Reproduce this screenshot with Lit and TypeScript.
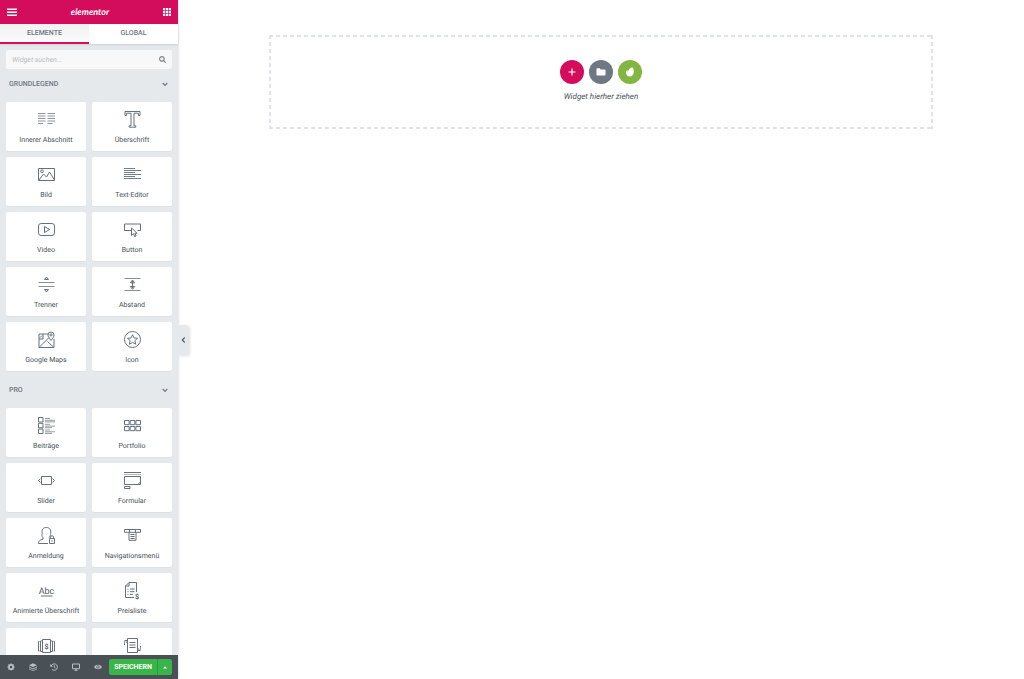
import { LitElement, html, svg, css } from "lit";
import { customElement, property, state } from "lit/decorators.js";

const icons: Record<string, unknown> = {
  columns: svg`<path opacity=".75" d="M0 2.500h7.500M9.500 2.500H17M0 5h7.500M9.500 5H17M0 7.500h7.500M9.500 7.500H17M0 10h7.500M9.500 10H17M0 12.500h5M9.500 12.500h5"/>`,
  heading: svg`<path d="M1 .5h15v4h-1.600V2.200H10v12.600h1.800v1.400H5.200v-1.400H7V2.200H2.600v2.300H1z"/>`,
  image: svg`<path d="M.5 2.500h16v12H.5zM1 14l4.500-6 3 3 3-5 5 8"/><circle cx="4" cy="5.300" r="1.400"/>`,
  text: svg`<path d="M0 2.500h11M0 4.500h17M0 6.500h11M0 8.500h17M0 10.500h11M0 12.500h17" opacity=".9"/>`,
  video: svg`<rect x=".5" y="2.500" width="16" height="12" rx="2.600"/><path d="M6.500 5.500l5 3-5 3z"/>`,
  button: svg`<path d="M7 9.500H.5v-6.500h16v6.500h-3"/><path d="M7.500 7v7.500l2-1.700 1.300 2.900 1.300-.6-1.300-2.800h2.300z"/>`,
  divider: svg`<path d="M.5 6.500h16M.5 10.500h16" opacity=".8"/><path d="M6.500 3.500L8.500 1 10.500 3.500zM6.500 13.500L8.500 16 10.500 13.500z"/>`,
  spacer: svg`<path d="M.5 2.500h16M.5 14.500h16" opacity=".8"/><path d="M8.500 5v7M6.300 6.800L8.500 4 10.700 6.800zM6.300 10.500l2.200 2.800 2.200-2.800z"/>`,
  map: svg`<path d="M10 3H1v13.500h15V8M1 16.500L11 6.500M9.500 10.500l6.500 6M1 8h4V3M2 6.500l2-2"/><path d="M13 9.500C11 7 10 5.600 10 4a3 3 0 0 1 6 0c0 1.600-1 3-3 5.500z"/><circle cx="13" cy="3.900" r="1.100"/>`,
  star: svg`<circle cx="8.500" cy="8.500" r="8"/><path d="M8.500 3.700l1.500 3.200 3.500.4-2.600 2.400.7 3.500-3.100-1.800-3.100 1.800.7-3.500-2.600-2.400 3.500-.4z"/>`,
  posts: svg`<path d="M.5.5h4.500v4.500H.5zM.5 6.300h4.500v4.500H.5zM.5 12h4.500v4.500H.5z"/><path opacity=".7" d="M7 1.500h5M7 3.300h10M7 4.900h10M7 7.300h5M7 9.100h10M7 10.700h7M7 13h5M7 14.800h10M7 16.400h7"/>`,
  portfolio: svg`<path d="M.5 3.500h4.600v4.200H.5zM6.200 3.500h4.600v4.200H6.200zM11.900 3.500h4.600v4.200h-4.600zM.5 9.500h4.600v4.200H.5zM6.200 9.500h4.600v4.200H6.200zM11.900 9.500h4.600v4.200h-4.600z"/>`,
  slider: svg`<path d="M3.500 4.500h10v8h-10zM2.500 6.500L.5 8.500l2 2M14.500 6.500l2 2-2 2"/>`,
  form: svg`<path d="M0 .5h17M.5 12.500v-8h16v8h-16M.5 14.500h5.500v2H.5z"/><path d="M0 2.500h17" opacity=".5"/><path d="M14 12.300l2.300-2.300"/>`,
  login: svg`<path d="M10 16.500H.5c0-2.500 1-3.300 4.500-4.300v-1.500C3.500 9.500 4 7.500 4.200 6.500 3.500 2.500 5 .5 8.300.5s4.800 2 4.400 6c-.2 1.500-.5 2.500-1.700 4"/><path d="M11.500 11.500h5v5h-5zM12.500 11.500v-1.300a1.500 1.500 0 0 1 3 0v1.300M14 13.300v1.400"/>`,
  nav: svg`<path d="M.5 2.500h16v2.800H.5zM5.500 2.500v2.800M11.500 2.500v2.800M5 5.300v8h7v-8M6.500 7.500h4M6.500 9.500h4M6.500 11.500h4"/>`,
  headline: svg`<text x="8.500" y="11.500" text-anchor="middle" font-size="9">Abc</text><path d="M3 14h11.500"/>`,
  pricelist: svg`<path d="M12.500 10V.5H5L1.500 4v11.500H10M5 .5V4H1.500M3.500 7h1M3.500 9.700h1M3.500 12.400h1M6 7h4.500M6 9.700h4.500M6 12.400h3"/><text x="11" y="17" font-size="7" font-weight="700">$</text>`,
  pricetable: svg`<path d="M4.500 2.500h8v13h-8zM2.500 4v10.500M4.500 4h-2M4.500 14.500h-2M12.500 4h2v10.500h-2M1.500 4.500H.5v9.500h1M15.500 4.500h1v9.500h-1"/><text x="8.500" y="11.500" text-anchor="middle" font-size="7" font-weight="700">$</text>`,
  flip: svg`<path d="M3.500 1.500h10v14h-10zM5.500 5.500h6M5.500 8h6M5.500 10.500h6M3.500 3.500h-1.500c-1 0-1.500 1-1.500 4.500M13.500 13.500h1.500c1 0 1.500-1 1.500-4.500"/><path d="M.5 3.500h2.500v2.500M16.500 13.500H14V11"/>`,
};

@customElement("widget-card")
class WidgetCard extends LitElement {
  @property() icon = "";
  @property() label = "";
  static styles = css`
    :host { display: block; }
    .card {
      width: 100%; height: 49px; padding: 9px 0 0; border: 0; border-radius: 2px;
      display: flex; flex-direction: column; align-items: center; gap: 7px;
      background: #fff; color: #495157; cursor: move;
      font: 7px/10px Roboto, sans-serif; white-space: nowrap; text-rendering: geometricPrecision;
      box-shadow: 0 1px 1px rgba(0, 0, 0, 0.03);
    }
    svg { width: 17px; height: 17px; flex: none; overflow: visible; fill: none; stroke: #66717b; stroke-width: 1; }
    text { fill: #556068; stroke: none; font-family: Roboto, sans-serif; }
  `;
  render() {
    return html`<button class="card" type="button">
      <svg viewBox="0 0 17 17" aria-hidden="true">${icons[this.icon]}</svg><span>${this.label}</span>
    </button>`;
  }
}

const groups = [
  {
    title: "Grundlegend",
    items: [
      ["columns", "Innerer Abschnitt"], ["heading", "Überschrift"],
      ["image", "Bild"], ["text", "Text-Editor"],
      ["video", "Video"], ["button", "Button"],
      ["divider", "Trenner"], ["spacer", "Abstand"],
      ["map", "Google Maps"], ["star", "Icon"],
    ],
  },
  {
    title: "Pro",
    items: [
      ["posts", "Beiträge"], ["portfolio", "Portfolio"],
      ["slider", "Slider"], ["form", "Formular"],
      ["login", "Anmeldung"], ["nav", "Navigationsmenü"],
      ["headline", "Animierte Überschrift"], ["pricelist", "Preisliste"],
      ["pricetable", ""], ["flip", ""],
    ],
  },
];

const tools = [
  { name: "Einstellungen", art: svg`<circle cx="4" cy="4" r="2.100" fill="none" stroke="currentColor" stroke-width="1.700"/><path stroke="currentColor" stroke-width="1.300" d="M4 .5v1M4 6.500v1M.5 4h1M6.500 4h1M1.500 1.500l.8.8M5.700 5.700l.8.8M1.500 6.500l.8-.8M5.700 2.300l.8-.8"/>` },
  { name: "Navigator", art: svg`<path d="M4 .3L8 2.200 4 4.100 0 2.200zM0 3.600l4 1.900 4-1.900v1L4 6.500 0 4.600zM0 5.600l4 1.900 4-1.900v.7L4 8.200 0 6.300z"/>` },
  { name: "Verlauf", art: svg`<path d="M1.200 3A3.200 3.200 0 1 1 2 6.400M4.300 2.300v2l1.300.8" fill="none" stroke="currentColor" stroke-width="1"/><path d="M.2 1v2.800H3z"/>` },
  { name: "Responsiver Modus", art: svg`<path d="M.5 1h7v4.700h-7zM4 5.700v1.500M2.400 7.300h3.200" fill="none" stroke="currentColor" stroke-width="1"/>` },
  { name: "Vorschau", art: svg`<path d="M0 4c2-3 6-3 8 0-2 3-6 3-8 0z"/><circle cx="4" cy="4" r="1.300" fill="none" stroke="#495157" stroke-width=".7"/>` },
];

@customElement("app-root")
class AppRoot extends LitElement {
  @state() tab = 0;
  static styles = css`
    :host { display: flex; height: 100vh; overflow: hidden; background: #fff; font-family: Roboto, sans-serif; color: #556068; text-rendering: geometricPrecision; }
    * { box-sizing: border-box; }
    button { font-family: inherit; border: 0; padding: 0; background: none; color: inherit; cursor: pointer; text-rendering: inherit; }
    svg { display: block; fill: currentColor; }
    .panel {
      position: relative; flex: none; width: 178px; display: flex; flex-direction: column;
      background: #e6e9ec; box-shadow: 0 0 3px rgba(0, 0, 0, 0.2);
    }
    .top { flex: none; height: 24px; padding: 0 7px; display: flex; align-items: center; justify-content: space-between; background: #d30c5c; color: #fff; }
    .top svg { width: 10px; height: 10px; }
    .top .grid { width: 8px; height: 8px; }
    .brand { font: italic 700 9px/20px Lato, sans-serif; }
    .tabs { flex: none; height: 20px; display: grid; grid-template-columns: 1fr 1fr; background: #fff; box-shadow: 0 1px 2px rgba(0, 0, 0, 0.1); }
    .tab { font-size: 7px; font-weight: 500; line-height: 18px; color: #6d7882; text-transform: uppercase; border-bottom: 2px solid transparent; }
    .tab.active { background: linear-gradient(#f1f1f1, #fbfbfb); border-color: #d30c5c; }
    .scroll { flex: 1; min-height: 0; overflow: hidden; padding: 6px 6px 0; }
    .search { display: flex; align-items: center; height: 19px; padding: 0 6px; border-radius: 2px; background: #f8f8f8; color: #7e8a94; }
    .search input { flex: 1; min-width: 0; border: 0; padding: 0; outline: 0; background: none; font: italic 7px/12px Roboto, sans-serif; color: #556068; text-rendering: inherit; }
    .search input::placeholder { color: #b4bcc3; opacity: 1; }
    .search svg { width: 7px; height: 7px; }
    .group { display: flex; justify-content: space-between; align-items: center; width: 100%; height: 30px; padding: 0 4px 0 3px; color: #6d7882; font-size: 7px; font-weight: 500; text-transform: uppercase; }
    .group svg { width: 6px; height: 6px; }
    .cards { display: grid; grid-template-columns: 1fr 1fr; gap: 6px; padding: 3px 0; }
    .cards + .group { height: 31px; }
    .foot { flex: none; height: 24px; padding: 0 6px 0 0; display: flex; align-items: center; background: #495157; color: #b8c0c6; }
    .tool { flex: 1; height: 24px; display: grid; place-items: center; }
    .tool svg { width: 8px; height: 8px; }
    .save, .more { height: 16px; background: #39b54a; color: #fff; }
    .save { width: 48px; font-size: 7px; font-weight: 700; text-transform: uppercase; border-radius: 2px 0 0 2px; }
    .more { width: 15px; display: grid; place-items: center; border-left: 1px solid #2f993e; border-radius: 0 2px 2px 0; }
    .more svg { width: 4px; height: 3px; }
    .toggle {
      position: absolute; left: 100%; top: 50%; transform: translateY(-50%); width: 10px; height: 30px;
      display: grid; place-items: center; background: #e6e9ec; color: #556068;
      border-radius: 0 2px 2px 0; box-shadow: 2px 1px 3px rgba(0, 0, 0, 0.12);
    }
    .toggle svg { width: 5px; height: 6px; }
    .line { fill: none; stroke: currentColor; stroke-width: 1.2; }
    .canvas { flex: 1; min-width: 0; padding: 35px 91px; }
    .drop {
      --h: repeating-linear-gradient(90deg, #dfe3e7 0 4px, transparent 4px 7px);
      --v: repeating-linear-gradient(#dfe3e7 0 4px, transparent 4px 7px);
      display: flex; flex-direction: column; align-items: center; gap: 7px; padding: 25px 0 26px;
      background: var(--h) 0 0 / 100% 2px no-repeat, var(--h) 0 100% / 100% 2px no-repeat,
        var(--v) 0 0 / 2px 100% no-repeat, var(--v) 100% 0 / 2px 100% no-repeat;
    }
    .actions { display: flex; gap: 5px; }
    .round { width: 24px; height: 24px; border-radius: 50%; display: grid; place-items: center; color: #fff; }
    .round svg { width: 10px; height: 10px; }
    .add { background: #d30c5c; }
    .library { background: #6d7882; }
    .envato { background: #82b541; }
    .hint { font: italic 8px/12px Roboto, sans-serif; color: #495157; }
  `;

  render() {
    return html`
      <aside class="panel">
        <header class="top">
          <button aria-label="Menü"><svg viewBox="0 0 10 10"><path d="M0 1.500h10v1.500H0zM0 4.500h10V6H0zM0 7.500h10V9H0z"/></svg></button>
          <span class="brand">elementor</span>
          <button aria-label="Widgets"><svg class="grid" viewBox="1 1 8.300 8.300">${[1, 4, 7].map((y) => [1, 4, 7].map((x) => svg`<rect x=${x} y=${y} width="2.300" height="2.300"/>`))}</svg></button>
        </header>
        <nav class="tabs">
          ${["Elemente", "Global"].map((t, i) => html`<button class="tab ${this.tab === i ? "active" : ""}" @click=${() => (this.tab = i)}>${t}</button>`)}
        </nav>
        <div class="scroll">
          <label class="search">
            <input type="text" placeholder="Widget suchen..." aria-label="Widget suchen" />
            <svg viewBox="0 0 7 7"><path class="line" d="M4.700 4.700L6.700 6.700"/><circle class="line" cx="2.900" cy="2.900" r="2.300"/></svg>
          </label>
          ${groups.map((g) => html`
            <button class="group"><span>${g.title}</span><svg viewBox="0 0 6 6"><path class="line" d="M.7 2L3 4.300 5.300 2"/></svg></button>
            <div class="cards">${g.items.map(([icon, label]) => html`<widget-card .icon=${icon} .label=${label}></widget-card>`)}</div>
          `)}
        </div>
        <footer class="foot">
          ${tools.map((t) => html`<button class="tool" aria-label=${t.name}><svg viewBox="0 0 8 8">${t.art}</svg></button>`)}
          <button class="save">Speichern</button>
          <button class="more" aria-label="Speicheroptionen"><svg viewBox="0 0 4 3"><path d="M0 2.500h4L2 .3z"/></svg></button>
        </footer>
        <button class="toggle" aria-label="Panel ausblenden"><svg viewBox="0 0 5 6"><path class="line" d="M3.700.5L1.300 3l2.400 2.500"/></svg></button>
      </aside>
      <main class="canvas">
        <section class="drop">
          <div class="actions">
            <button class="round add" aria-label="Abschnitt hinzufügen"><svg viewBox="0 0 10 10"><path d="M4.400 1.500h1.200v2.900h2.900v1.200H5.600v2.900H4.400V5.600H1.500V4.400h2.900z"/></svg></button>
            <button class="round library" aria-label="Vorlage hinzufügen"><svg viewBox="0 0 10 10"><path d="M.5 2q0-.7.7-.7h2.500l1 1.100h4.100q.7 0 .7.700v4.700q0 .7-.7.700H1.200q-.7 0-.7-.7z"/></svg></button>
            <button class="round envato" aria-label="Envato Elements"><svg viewBox="0 0 10 10"><path d="M7.500.6c.8.2 1.500 2.600 1.300 4.600C8.600 7.700 7 9.500 4.900 9.500 2.700 9.500 1 8 1 5.800c0-1.100.4-2 1-2.600.3-.2.6 0 .5.4-.1.700 0 1.400.3 2C2.900 3 5.500.2 7.500.6z"/></svg></button>
          </div>
          <div class="hint">Widget hierher ziehen</div>
        </section>
      </main>
    `;
  }
}
